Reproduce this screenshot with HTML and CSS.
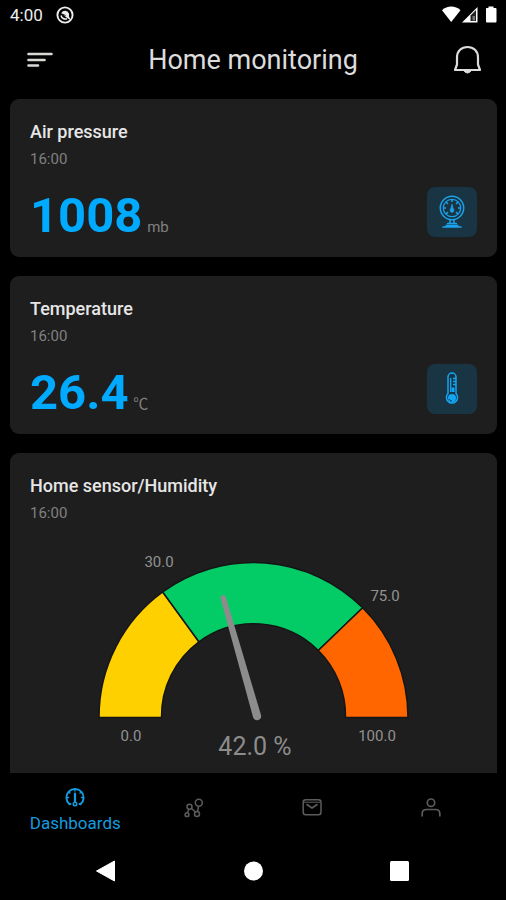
FILE: index.html
```html
<!DOCTYPE html>
<html lang="en">
<head>
<meta charset="utf-8">
<meta name="viewport" content="width=device-width, initial-scale=1">
<title>Home monitoring</title>
<link rel="stylesheet" href="styles.css">
</head>
<body>
<div class="app">
  <div class="status">
    <span class="status-time">4:00</span>
    <svg class="status-badge" viewBox="0 0 18 18" width="18" height="18" aria-hidden="true">
      <circle cx="9" cy="9" r="7.6" fill="none" stroke="#eee" stroke-width="1.9"/>
      <path d="M5.2 7.2A4.3 4.3 0 0 1 13 7.4V10.6L15 14.5L10.5 11.5Z" fill="#eee"/>
      <path d="M5 9.5A4.4 4.4 0 0 0 11 12.7" fill="none" stroke="#eee" stroke-width="1.5"/>
      <path d="M6 8L9.5 9.5" stroke="#111" stroke-width="1"/>
    </svg>
    <svg class="status-signals" viewBox="0 0 56 18" width="56" height="18" aria-hidden="true">
      <path d="M0 4.200C5-.8 13.500-.8 18.500 4.200L9.200 16Z" fill="#fff"/>
      <path d="M20 16.500L35.500 1V16.500Z" fill="#fff"/>
      <path d="M28.500 9.500L34 4V15H28.500Z" fill="#222"/>
      <path d="M30.500 10H33V14.500H30.500Z" fill="#777"/>
      <path d="M44.500 2H46.500V.500H51.500V2H53.500Q54.500 2 54.500 3V15.500Q54.500 16.500 53.500 16.500H45Q44 16.500 44 15.500V3Q44 2 44.500 2Z" fill="#fff"/>
    </svg>
  </div>

  <header class="header">
    <button class="icon-button" aria-label="Menu">
      <svg viewBox="0 0 28 28" width="28" height="28" fill="none" stroke="#d9d9d5" stroke-width="2.600" stroke-linecap="round">
        <path d="M3.500 8H26.500M3.500 14H19.500M3.500 19.500H13"/>
      </svg>
    </button>
    <h1 class="heading">Home monitoring</h1>
    <button class="icon-button" aria-label="Notifications">
      <svg viewBox="0 0 28 30" width="28" height="30" fill="none" stroke="#dcdcdc" stroke-width="2.200" stroke-linejoin="round">
        <path d="M4 19.500V12.500C4 6 8.500 2 14.500 2S25 6 25 12.500V19.500L27 25H2Z"/>
        <path d="M10.500 25.500Q14.500 30.500 18.500 25.500Z" fill="#dcdcdc" stroke-width="1"/>
      </svg>
    </button>
  </header>

  <main class="cards">
    <section class="card">
      <h2 class="card-title">Air pressure</h2>
      <p class="card-time">16:00</p>
      <div class="card-row">
        <p class="reading"><span class="value">1008</span> <span class="unit">mb</span></p>
        <span class="tile">
          <svg viewBox="0 0 26 34" width="26" height="34" fill="none" stroke="#1ba2ec">
            <circle cx="13" cy="13" r="11.700" stroke-width="1.500"/>
            <circle cx="13" cy="13" r="8.700" stroke-width="1.200"/>
            <path d="M13 4.500V7M4.500 13H7M19 13H21.500M7 7L9 9M19 7L17 9M7.200 19L9 17M18.800 19L17 17" stroke-width="1.500"/>
            <path d="M13 9L14 13Q15.500 15 14.700 16.500Q13 18.500 11.300 16.500Q10.500 15 12 13Z" fill="#1ba2ec" stroke-width=".6"/>
            <path d="M11 24.500V28.500H15V24.500M8 28.500H18M6.500 30.500H19.500M3.500 32H22.500" stroke-width="1.500"/>
          </svg>
        </span>
      </div>
    </section>

    <section class="card">
      <h2 class="card-title">Temperature</h2>
      <p class="card-time">16:00</p>
      <div class="card-row">
        <p class="reading"><span class="value">26.4</span> <span class="unit">℃</span></p>
        <span class="tile">
          <svg viewBox="0 0 26 34" width="26" height="34" fill="none" stroke="#12a6f5">
            <path d="M9 21.500V5A4 4 0 0 1 17 5V21.500A5.600 5.600 0 1 1 9 21.500Z" stroke-width="1.500"/>
            <path d="M11.700 20V6" stroke-width="1.300"/>
            <path d="M14 6.500H17M14 9.500H17M14 12.500H17" stroke-width="1.300"/>
            <path d="M14 15.500V20" stroke-width="3"/>
            <circle cx="13" cy="26" r="4" fill="#12a6f5" stroke="none"/>
            <path d="M10 27A3.200 3.200 0 0 0 13 29" stroke="#16384a" stroke-width="1"/>
          </svg>
        </span>
      </div>
    </section>

    <section class="card">
      <h2 class="card-title">Home sensor/Humidity</h2>
      <p class="card-time">16:00</p>
      <svg class="gauge" viewBox="0 0 447 240" role="img" aria-label="Humidity 42.0 %">
        <g stroke="#151515" stroke-width="1.500">
          <path d="M69 180.500A154.500 154.500 0 0 1 132.700 55L168.900 104.800A93 93 0 0 0 131.500 180.500Z" fill="#ffd000"/>
          <path d="M132.700 55A154.500 154.500 0 0 1 332.700 70.800L288.300 113.500A92 92 0 0 0 168.900 104.800Z" fill="#03cc66"/>
          <path d="M332.700 70.800A154.500 154.500 0 0 1 378 180.500H315.500A92 92 0 0 0 288.300 113.500Z" fill="#ff6600"/>
        </g>
        <path d="M190.500 61.500L223 180A3.600 3.600 0 0 0 231 178L196 60.500A2.500 2.500 0 0 0 190.500 61.500Z" fill="#8c8c8c"/>
        <g class="gauge-label">
          <text x="129" y="30">30.0</text>
          <text x="355" y="64">75.0</text>
          <text x="101" y="204">0.0</text>
          <text x="347" y="204">100.0</text>
        </g>
        <text class="gauge-value" x="225" y="218">42.0 %</text>
      </svg>
    </section>
  </main>

  <nav class="tabs" aria-label="Sections">
    <a class="tab tab-active" href="#dashboards" aria-current="page">
      <svg viewBox="0 0 20 20" width="20" height="20" fill="none" stroke="currentColor" stroke-width="1.900" stroke-linecap="round">
        <path d="M5.500 17L4.500 17.200A8.600 8.600 0 1 1 15.500 17.200L14.500 17"/>
        <path d="M10 2V4M1.500 10.500H3.500M16.500 10.500H18.500M4 5L5 6M16 5L15 6" stroke-width="1.300"/>
        <path d="M10 6.500V15" stroke-width="2.200"/>
        <circle cx="10" cy="17" r="1.700" stroke-width="1.600"/>
      </svg>
      <span>Dashboards</span>
    </a>
    <a class="tab" href="#devices" aria-label="Devices">
      <svg viewBox="0 0 20 20" width="20" height="20" fill="none" stroke="currentColor" stroke-width="1.500">
        <circle cx="14.800" cy="4.800" r="3.500"/><circle cx="5.500" cy="8.800" r="2.500"/>
        <circle cx="3" cy="16.700" r="1.900"/><circle cx="13" cy="16" r="2.500"/>
        <path d="M4.800 11.200L3.600 14.800M7.500 10.500L11.500 14M14.500 8.500L13.500 13.500"/>
      </svg>
    </a>
    <a class="tab" href="#messages" aria-label="Messages">
      <svg viewBox="0 0 20 20" width="20" height="20" fill="none" stroke="currentColor" stroke-width="1.500">
        <rect x="1.200" y="1.700" width="17.800" height="15" rx="2.500"/><path d="M2 4.200H18" stroke-width="1"/>
        <path d="M4.500 6.200L10 10L15.500 6.200" stroke-width="1.700" stroke-linejoin="round"/>
      </svg>
    </a>
    <a class="tab" href="#profile" aria-label="Profile">
      <svg viewBox="0 0 20 20" width="20" height="20" fill="none" stroke="currentColor" stroke-width="1.700">
        <circle cx="10" cy="4.700" r="3.700"/><path d="M1.200 18.500V15.500Q1.200 11.500 5.500 11.500H14.500Q18.800 11.500 18.800 15.500V18.500"/>
      </svg>
    </a>
  </nav>

  <div class="system">
    <button class="system-button" aria-label="Back">
      <svg viewBox="0 0 22 22" width="22" height="22"><path d="M19.500 1V21L1.500 11Z" fill="#fff" stroke="#fff" stroke-linejoin="round"/></svg>
    </button>
    <button class="system-button" aria-label="Home">
      <svg viewBox="0 0 22 22" width="22" height="22"><circle cx="11.500" cy="11" r="9.500" fill="#fff"/></svg>
    </button>
    <button class="system-button" aria-label="Recent apps">
      <svg viewBox="0 0 22 22" width="22" height="22"><rect x="1" y="1" width="19" height="20" rx="1.500" fill="#fff"/></svg>
    </button>
  </div>
</div>
</body>
</html>
```
FILE: styles.css
```css
* {
  box-sizing: border-box;
}

body {
  margin: 0;
  background: #000;
  color: #eee;
  font-family: Roboto, "Noto Sans CJK SC", sans-serif;
}

h1, h2, p {
  margin: 0;
}

svg {
  display: block;
}

button {
  display: flex;
  padding: 0;
  border: 0;
  background: none;
}

.app {
  display: flex;
  flex-direction: column;
  height: 100vh;
}

.status {
  display: flex;
  align-items: center;
  gap: 13px;
  padding: 5px 8px 5px 10px;
  font-size: 17px;
  line-height: 20px;
}

.status-signals {
  margin-left: auto;
}

.header {
  display: flex;
  align-items: center;
  justify-content: space-between;
  padding: 10px 25px 19px;
}

.heading {
  color: #dcdcdc;
  font-size: 27px;
  font-weight: 400;
  line-height: 40px;
}

.cards {
  display: flex;
  flex: 1;
  flex-direction: column;
  gap: 19px;
  min-height: 0;
  padding: 0 9px 0 10px;
  overflow: hidden;
}

.card {
  flex: none;
  padding: 20px;
  border-radius: 9px;
  background: #1e1e1e;
}

.card-title {
  color: #e6e6e6;
  font-size: 18px;
  font-weight: 500;
  line-height: 26px;
}

.card-time {
  color: #808080;
  font-size: 15px;
  line-height: 28px;
}

.card-row {
  display: flex;
  align-items: flex-end;
  justify-content: space-between;
  margin-top: 14px;
}

.reading {
  color: #808080;
  font-size: 15px;
  line-height: 16px;
}

.value {
  color: #00aaff;
  font-size: 49px;
  font-weight: 700;
  line-height: 42px;
}

.unit {
  margin-left: 1px;
}

.tile {
  display: flex;
  align-items: center;
  justify-content: center;
  width: 50px;
  height: 50px;
  border-radius: 8px;
  background: #193442;
}

.gauge {
  width: 100%;
  margin-top: 10px;
}

.gauge-label {
  fill: #929292;
  font-size: 15px;
  text-anchor: middle;
}

.gauge-value {
  fill: #8c8c8c;
  font-size: 25px;
  text-anchor: middle;
}

.tabs {
  display: grid;
  grid-template-columns: repeat(4, 1fr);
  height: 70px;
  padding: 0 16px;
}

.tab {
  display: flex;
  flex-direction: column;
  align-items: center;
  justify-content: center;
  gap: 4px;
  color: #5c5c5c;
  font-size: 17px;
  line-height: 24px;
  text-decoration: none;
}

.tab-active {
  padding-top: 6px;
  color: #159bdf;
}

.system {
  display: grid;
  grid-template-columns: repeat(3, 1fr);
  justify-items: center;
  height: 57px;
  padding: 17px 32px;
}
```
